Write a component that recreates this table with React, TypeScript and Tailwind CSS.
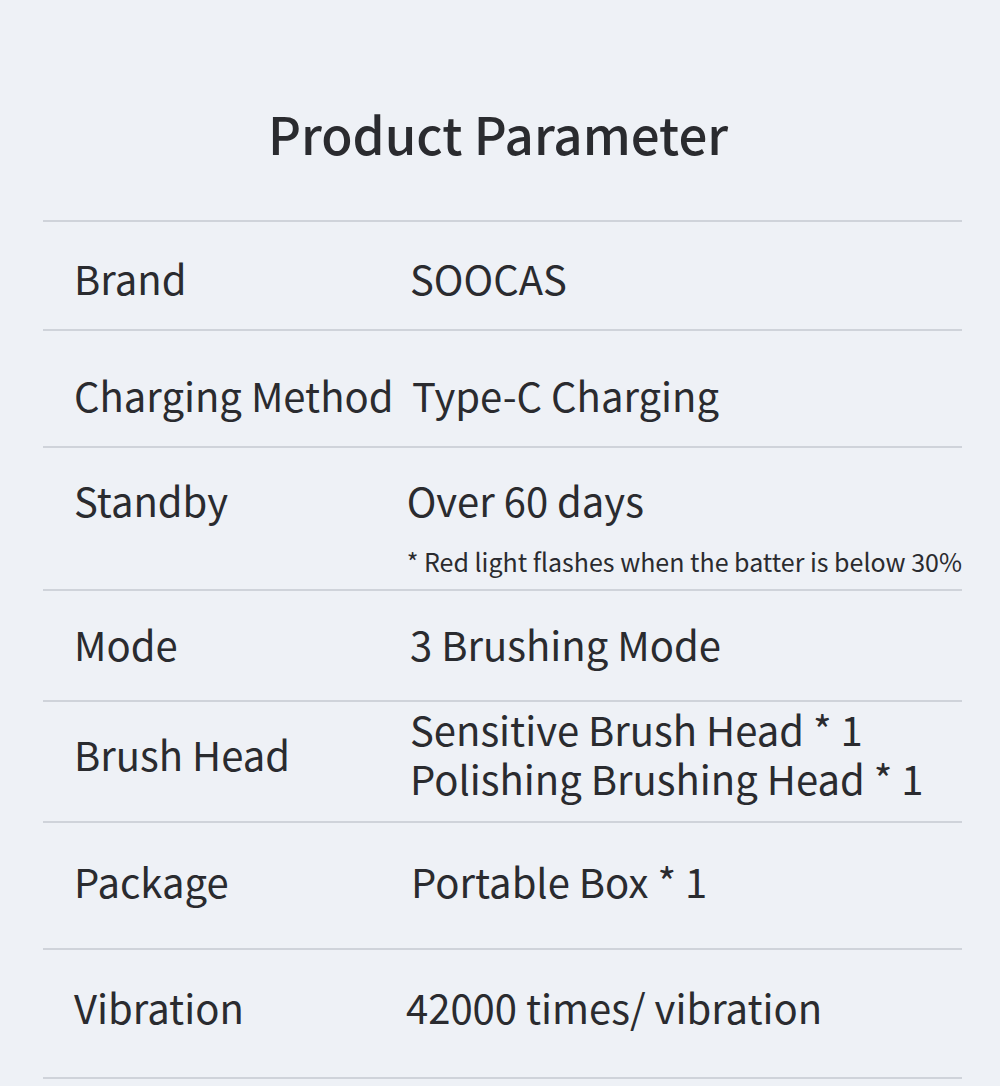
import React from "react";

type Row = {
  label: string;
  values: string[];
  note?: string;
  rowClass: string; // height + top padding of the value column
  labelClass: string;
  valueClass?: string;
};

const rows: Row[] = [
  { label: "Brand", values: ["SOOCAS"], rowClass: "h-[109px] pt-[32px]", labelClass: "" },
  {
    label: "Charging Method",
    values: ["Type-C Charging"],
    rowClass: "h-[117px] pt-[40px]",
    labelClass: "",
    valueClass: "ml-[2px]",
  },
  {
    label: "Standby",
    values: ["Over 60 days"],
    note: "* Red light flashes when the batter is below 30%",
    rowClass: "h-[143px] pt-[28px]",
    labelClass: "",
    valueClass: "ml-[2px]",
  },
  { label: "Mode", values: ["3 Brushing Mode"], rowClass: "h-[111px] pt-[29px]", labelClass: "" },
  {
    label: "Brush Head",
    values: ["Sensitive Brush Head * 1", "Polishing Brushing Head * 1"],
    rowClass: "h-[121px] pt-[3px]",
    labelClass: "pt-[25px]",
  },
  {
    label: "Package",
    values: ["Portable Box * 1"],
    rowClass: "h-[127px] pt-[34px]",
    labelClass: "",
    valueClass: "ml-[1px]",
  },
  {
    label: "Vibration",
    values: ["42000 times/ vibration"],
    rowClass: "h-[129px] pt-[33px]",
    labelClass: "",
    valueClass: "-ml-[4px]",
  },
];

export default function App() {
  return (
    <div
      className="w-[1000px] h-[1086px] overflow-hidden bg-[#eef1f6] text-[#2a2b2f]"
      style={{ fontFamily: '"Noto Sans CJK SC", "Noto Sans", sans-serif' }}
    >
      <h1 className="pt-[100px] pb-[54px] pr-[4px] text-center text-[51px] leading-[66px] font-medium">
        Product Parameter
      </h1>
      <div className="ml-[43px] mr-[38px] border-t-2 border-[#cfd3da]">
        {rows.map((row) => (
          <div
            key={row.label}
            className={`flex items-start border-b-2 border-[#cfd3da] ${row.rowClass}`}
          >
            <div className={`w-[367px] pl-[31px] text-[40px] leading-[48px] ${row.labelClass}`}>
              {row.label}
            </div>
            <div className={`flex flex-col ${row.valueClass ?? ""}`}>
              {row.values.map((v) => (
                <div key={v} className="text-[40px] leading-[49px] whitespace-nowrap">
                  {v}
                </div>
              ))}
              {row.note && (
                <div className="mt-[20px] text-[25px] leading-[32px] whitespace-nowrap">
                  {row.note}
                </div>
              )}
            </div>
          </div>
        ))}
      </div>
    </div>
  );
}
